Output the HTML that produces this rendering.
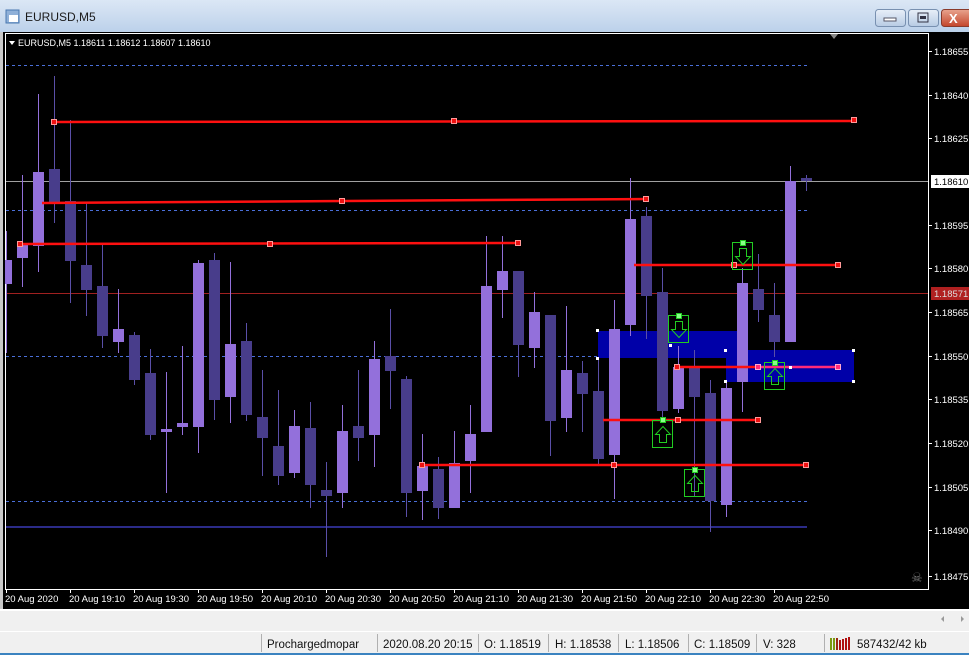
<!DOCTYPE html>
<html><head><meta charset="utf-8"><style>
html,body{margin:0;padding:0;width:969px;height:655px;overflow:hidden;background:#000;font-family:"Liberation Sans",sans-serif}
svg{display:block}
</style></head><body>
<svg width="969" height="655" xmlns="http://www.w3.org/2000/svg" font-family="Liberation Sans, sans-serif">
<defs>
<linearGradient id="tb" x1="0" y1="0" x2="0" y2="1"><stop offset="0" stop-color="#dbe7f5"/><stop offset="1" stop-color="#bcd1ea"/></linearGradient>
<linearGradient id="bt" x1="0" y1="0" x2="0" y2="1"><stop offset="0" stop-color="#e8eff8"/><stop offset="1" stop-color="#b7cbe4"/></linearGradient>
<linearGradient id="cl" x1="0" y1="0" x2="0" y2="1"><stop offset="0" stop-color="#e8a48f"/><stop offset="1" stop-color="#c4452a"/></linearGradient>
</defs>
<rect x="0" y="0" width="969" height="32" fill="url(#tb)"/>
<rect x="6" y="10" width="13" height="13" fill="#8fb0d8" stroke="#4a78b0"/>
<rect x="9" y="15" width="9" height="7" fill="#fff"/>
<text x="25" y="21" font-size="12" fill="#1a1a1a">EURUSD,M5</text>
<rect x="875.5" y="9.5" width="30" height="17" rx="3" fill="url(#bt)" stroke="#7890b0"/>
<rect x="884" y="18" width="12" height="3" fill="#fff" stroke="#556"/>
<rect x="908.5" y="9.5" width="30" height="17" rx="3" fill="url(#bt)" stroke="#7890b0"/>
<rect x="918" y="13" width="10" height="9" fill="none" stroke="#334"/><rect x="920" y="16" width="6" height="3" fill="#334"/>
<rect x="941.5" y="9.5" width="30" height="17" rx="3" fill="url(#cl)" stroke="#8a3a2a"/>
<text x="949" y="23" font-size="13" font-weight="bold" fill="#fff">X</text>
<rect x="0" y="32" width="969" height="577" fill="#000"/>
<rect x="0" y="32" width="3" height="577" fill="#c8c8c8"/>
<rect x="5.5" y="33.5" width="923" height="556" fill="none" stroke="#fff"/>
<g stroke="#4a6fd8" stroke-dasharray="3,3" stroke-width="1">
<line x1="6" y1="65.5" x2="807" y2="65.5"/>
<line x1="6" y1="210.5" x2="807" y2="210.5"/>
<line x1="6" y1="356.5" x2="807" y2="356.5"/>
<line x1="6" y1="501.5" x2="807" y2="501.5"/>
</g>
<line x1="6" y1="527" x2="807" y2="527" stroke="#2b2b88" stroke-width="2"/>
<line x1="6" y1="181.5" x2="928" y2="181.5" stroke="#a0a0a0"/>
<line x1="6" y1="293.5" x2="928" y2="293.5" stroke="#a02020"/>
<rect x="598" y="331" width="142" height="27" fill="#0000a8"/>
<rect x="726" y="350" width="128" height="32" fill="#0000a8"/>
<g stroke-width="1">
<g fill="#9370db" stroke="#9370db">
<line x1="6.5" y1="231" x2="6.5" y2="353"/><rect x="5" y="260" width="7" height="24" stroke="none"/>
<line x1="22.5" y1="175" x2="22.5" y2="287"/><rect x="17" y="245" width="11" height="13" stroke="none"/>
<line x1="38.5" y1="94" x2="38.5" y2="272"/><rect x="33" y="172" width="11" height="74" stroke="none"/>
<line x1="118.5" y1="289" x2="118.5" y2="353"/><rect x="113" y="329" width="11" height="13" stroke="none"/>
<line x1="166.5" y1="372" x2="166.5" y2="493"/><rect x="161" y="429" width="11" height="3" stroke="none"/>
<line x1="182.5" y1="346" x2="182.5" y2="435"/><rect x="177" y="423" width="11" height="4" stroke="none"/>
<line x1="198.5" y1="260" x2="198.5" y2="453"/><rect x="193" y="263" width="11" height="164" stroke="none"/>
<line x1="230.5" y1="262" x2="230.5" y2="423"/><rect x="225" y="344" width="11" height="53" stroke="none"/>
<line x1="294.5" y1="410" x2="294.5" y2="478"/><rect x="289" y="426" width="11" height="47" stroke="none"/>
<line x1="342.5" y1="405" x2="342.5" y2="508"/><rect x="337" y="431" width="11" height="62" stroke="none"/>
<line x1="374.5" y1="341" x2="374.5" y2="467"/><rect x="369" y="359" width="11" height="76" stroke="none"/>
<line x1="422.5" y1="434" x2="422.5" y2="520"/><rect x="417" y="466" width="11" height="25" stroke="none"/>
<line x1="454.5" y1="431" x2="454.5" y2="508"/><rect x="449" y="463" width="11" height="45" stroke="none"/>
<line x1="470.5" y1="405" x2="470.5" y2="493"/><rect x="465" y="434" width="11" height="27" stroke="none"/>
<line x1="486.5" y1="236" x2="486.5" y2="432"/><rect x="481" y="286" width="11" height="146" stroke="none"/>
<line x1="502.5" y1="236" x2="502.5" y2="318"/><rect x="497" y="271" width="11" height="19" stroke="none"/>
<line x1="534.5" y1="292" x2="534.5" y2="368"/><rect x="529" y="312" width="11" height="36" stroke="none"/>
<line x1="566.5" y1="306" x2="566.5" y2="432"/><rect x="561" y="370" width="11" height="48" stroke="none"/>
<line x1="614.5" y1="300" x2="614.5" y2="499"/><rect x="609" y="329" width="11" height="126" stroke="none"/>
<line x1="630.5" y1="178" x2="630.5" y2="336"/><rect x="625" y="219" width="11" height="106" stroke="none"/>
<line x1="678.5" y1="346" x2="678.5" y2="413"/><rect x="673" y="367" width="11" height="42" stroke="none"/>
<line x1="726.5" y1="380" x2="726.5" y2="517"/><rect x="721" y="388" width="11" height="117" stroke="none"/>
<line x1="742.5" y1="268" x2="742.5" y2="412"/><rect x="737" y="283" width="11" height="99" stroke="none"/>
<line x1="790.5" y1="166" x2="790.5" y2="342"/><rect x="785" y="181" width="11" height="161" stroke="none"/>
</g>
<g fill="#483d8b" stroke="#5a4fa8">
<line x1="54.5" y1="76" x2="54.5" y2="223"/><rect x="49" y="169" width="11" height="33" stroke="none"/>
<line x1="70.5" y1="120" x2="70.5" y2="303"/><rect x="65" y="201" width="11" height="60" stroke="none"/>
<line x1="86.5" y1="203" x2="86.5" y2="316"/><rect x="81" y="265" width="11" height="25" stroke="none"/>
<line x1="102.5" y1="245" x2="102.5" y2="348"/><rect x="97" y="286" width="11" height="50" stroke="none"/>
<line x1="134.5" y1="332" x2="134.5" y2="385"/><rect x="129" y="335" width="11" height="45" stroke="none"/>
<line x1="150.5" y1="349" x2="150.5" y2="440"/><rect x="145" y="373" width="11" height="62" stroke="none"/>
<line x1="214.5" y1="253" x2="214.5" y2="420"/><rect x="209" y="260" width="11" height="140" stroke="none"/>
<line x1="246.5" y1="323" x2="246.5" y2="421"/><rect x="241" y="341" width="11" height="74" stroke="none"/>
<line x1="262.5" y1="370" x2="262.5" y2="476"/><rect x="257" y="417" width="11" height="21" stroke="none"/>
<line x1="278.5" y1="390" x2="278.5" y2="485"/><rect x="273" y="446" width="11" height="30" stroke="none"/>
<line x1="310.5" y1="402" x2="310.5" y2="508"/><rect x="305" y="428" width="11" height="57" stroke="none"/>
<line x1="326.5" y1="462" x2="326.5" y2="557"/><rect x="321" y="490" width="11" height="6" stroke="none"/>
<line x1="358.5" y1="370" x2="358.5" y2="461"/><rect x="353" y="426" width="11" height="12" stroke="none"/>
<line x1="390.5" y1="309" x2="390.5" y2="409"/><rect x="385" y="356" width="11" height="15" stroke="none"/>
<line x1="406.5" y1="376" x2="406.5" y2="517"/><rect x="401" y="379" width="11" height="114" stroke="none"/>
<line x1="438.5" y1="457" x2="438.5" y2="519"/><rect x="433" y="469" width="11" height="39" stroke="none"/>
<line x1="518.5" y1="271" x2="518.5" y2="377"/><rect x="513" y="271" width="11" height="74" stroke="none"/>
<line x1="550.5" y1="315" x2="550.5" y2="456"/><rect x="545" y="315" width="11" height="106" stroke="none"/>
<line x1="582.5" y1="361" x2="582.5" y2="432"/><rect x="577" y="373" width="11" height="21" stroke="none"/>
<line x1="598.5" y1="360" x2="598.5" y2="466"/><rect x="593" y="391" width="11" height="68" stroke="none"/>
<line x1="646.5" y1="207" x2="646.5" y2="339"/><rect x="641" y="216" width="11" height="80" stroke="none"/>
<line x1="662.5" y1="268" x2="662.5" y2="420"/><rect x="657" y="292" width="11" height="119" stroke="none"/>
<line x1="694.5" y1="350" x2="694.5" y2="497"/><rect x="689" y="367" width="11" height="30" stroke="none"/>
<line x1="710.5" y1="380" x2="710.5" y2="532"/><rect x="705" y="393" width="11" height="108" stroke="none"/>
<line x1="758.5" y1="254" x2="758.5" y2="322"/><rect x="753" y="289" width="11" height="21" stroke="none"/>
<line x1="774.5" y1="283" x2="774.5" y2="357"/><rect x="769" y="315" width="11" height="27" stroke="none"/>
<line x1="806.5" y1="175" x2="806.5" y2="191"/><rect x="801" y="178" width="11" height="3" stroke="none"/>
</g>
</g>
<g stroke="#ff1010" stroke-width="2.5">
<line x1="54" y1="122" x2="854" y2="121"/>
<line x1="42" y1="203" x2="646" y2="199"/>
<line x1="20" y1="244" x2="518" y2="243"/>
<line x1="634" y1="265" x2="838" y2="265"/>
<line x1="603" y1="420" x2="758" y2="420"/>
<line x1="420" y1="465" x2="806" y2="465"/>
<line x1="677" y1="367" x2="758" y2="367"/>
</g>
<line x1="758" y1="367" x2="838" y2="367" stroke="#ff2a7a" stroke-width="2.5"/>
<g fill="#ee1111" stroke="#ff9999" stroke-width="1">
<rect x="51.5" y="119.5" width="5" height="5"/><rect x="451.5" y="118.5" width="5" height="5"/><rect x="851.5" y="117.5" width="5" height="5"/>
<rect x="339.5" y="198.5" width="5" height="5"/><rect x="643.5" y="196.5" width="5" height="5"/>
<rect x="17.5" y="241.5" width="5" height="5"/><rect x="267.5" y="241.5" width="5" height="5"/><rect x="515.5" y="240.5" width="5" height="5"/>
<rect x="731.5" y="262.5" width="5" height="5"/><rect x="835.5" y="262.5" width="5" height="5"/>
<rect x="675.5" y="417.5" width="5" height="5"/><rect x="755.5" y="417.5" width="5" height="5"/>
<rect x="419.5" y="462.5" width="5" height="5"/><rect x="611.5" y="462.5" width="5" height="5"/><rect x="803.5" y="462.5" width="5" height="5"/>
<rect x="674.5" y="364.5" width="5" height="5"/>
</g>
<g fill="#ff2a7a" stroke="#ffaacc"><rect x="755.5" y="364.5" width="5" height="5"/><rect x="835.5" y="364.5" width="5" height="5"/></g>
<g fill="#fff">
<rect x="596" y="329" width="3" height="3"/><rect x="596" y="357" width="3" height="3"/><rect x="669" y="344" width="3" height="3"/>
<rect x="724" y="349" width="3" height="3"/><rect x="724" y="380" width="3" height="3"/><rect x="852" y="349" width="3" height="3"/><rect x="852" y="380" width="3" height="3"/><rect x="789" y="366" width="3" height="3"/>
</g>
<g fill="none" stroke="#22cc22" stroke-width="1">
<rect x="668.5" y="315.5" width="20" height="27"/>
<rect x="732.5" y="242.5" width="20" height="27"/>
<rect x="652.5" y="420.5" width="20" height="27"/>
<rect x="684.5" y="469.5" width="20" height="27"/>
<rect x="764.5" y="362.5" width="20" height="27"/>
<path d="M675.5 321.5h7v8h4l-7.5 8-7.5-8h4z"/>
<path d="M739.5 248.5h7v8h4l-7.5 8-7.5-8h4z"/>
<path d="M659.5 442.5h7v-8h4l-7.5-8-7.5 8h4z"/>
<path d="M691.5 491.5h7v-8h4l-7.5-8-7.5 8h4z"/>
<path d="M771.5 384.5h7v-8h4l-7.5-8-7.5 8h4z"/>
</g>
<g fill="#88ff88" stroke="#22cc22"><rect x="676.5" y="313.5" width="5" height="5"/><rect x="740.5" y="240.5" width="5" height="5"/><rect x="660.5" y="417.5" width="5" height="5"/><rect x="692.5" y="467.5" width="5" height="5"/><rect x="772.5" y="360.5" width="5" height="5"/></g>
<path d="M9 41h6l-3 4z" fill="#fff"/>
<text x="18" y="46" font-size="9" fill="#fff">EURUSD,M5  1.18611 1.18612 1.18607 1.18610</text>
<path d="M830 34h8l-4 5z" fill="#888"/>
<text x="911" y="582" font-size="13" fill="#777">☠</text>
<g font-size="9.5" fill="#fff">
<g stroke="#fff"><line x1="929" y1="51.5" x2="932" y2="51.5"/><line x1="929" y1="95.5" x2="932" y2="95.5"/><line x1="929" y1="138.5" x2="932" y2="138.5"/><line x1="929" y1="225.5" x2="932" y2="225.5"/><line x1="929" y1="268.5" x2="932" y2="268.5"/><line x1="929" y1="312.5" x2="932" y2="312.5"/><line x1="929" y1="356.5" x2="932" y2="356.5"/><line x1="929" y1="399.5" x2="932" y2="399.5"/><line x1="929" y1="443.5" x2="932" y2="443.5"/><line x1="929" y1="487.5" x2="932" y2="487.5"/><line x1="929" y1="530.5" x2="932" y2="530.5"/><line x1="929" y1="576.5" x2="932" y2="576.5"/></g>
<text x="934" y="55">1.18655</text><text x="934" y="99">1.18640</text><text x="934" y="142">1.18625</text>
<rect x="931" y="175" width="38" height="13" fill="#fff"/><text x="934" y="185" fill="#000">1.18610</text>
<text x="934" y="229">1.18595</text><text x="934" y="272">1.18580</text>
<rect x="931" y="287" width="38" height="13" fill="#b02020"/><text x="934" y="297" fill="#ddd">1.18571</text>
<text x="934" y="316">1.18565</text><text x="934" y="360">1.18550</text><text x="934" y="403">1.18535</text><text x="934" y="447">1.18520</text><text x="934" y="491">1.18505</text><text x="934" y="534">1.18490</text><text x="934" y="580">1.18475</text>
</g>
<g font-size="9.5" fill="#fff">
<g stroke="#fff"><line x1="6.5" y1="589" x2="6.5" y2="593"/><line x1="70.5" y1="589" x2="70.5" y2="593"/><line x1="134.5" y1="589" x2="134.5" y2="593"/><line x1="198.5" y1="589" x2="198.5" y2="593"/><line x1="262.5" y1="589" x2="262.5" y2="593"/><line x1="326.5" y1="589" x2="326.5" y2="593"/><line x1="390.5" y1="589" x2="390.5" y2="593"/><line x1="454.5" y1="589" x2="454.5" y2="593"/><line x1="518.5" y1="589" x2="518.5" y2="593"/><line x1="582.5" y1="589" x2="582.5" y2="593"/><line x1="646.5" y1="589" x2="646.5" y2="593"/><line x1="710.5" y1="589" x2="710.5" y2="593"/><line x1="774.5" y1="589" x2="774.5" y2="593"/></g>
<text x="5" y="602">20 Aug 2020</text><text x="69" y="602">20 Aug 19:10</text><text x="133" y="602">20 Aug 19:30</text><text x="197" y="602">20 Aug 19:50</text><text x="261" y="602">20 Aug 20:10</text><text x="325" y="602">20 Aug 20:30</text><text x="389" y="602">20 Aug 20:50</text><text x="453" y="602">20 Aug 21:10</text><text x="517" y="602">20 Aug 21:30</text><text x="581" y="602">20 Aug 21:50</text><text x="645" y="602">20 Aug 22:10</text><text x="709" y="602">20 Aug 22:30</text><text x="773" y="602">20 Aug 22:50</text>
</g>
<rect x="0" y="609" width="969" height="2" fill="#fff"/>
<rect x="0" y="611" width="969" height="21" fill="#f0f0f0"/>
<rect x="0" y="631" width="969" height="1" fill="#fff"/>
<rect x="0" y="632" width="969" height="21" fill="#f0f0f0"/>
<rect x="0" y="653" width="969" height="2" fill="#3b83c0"/>
<path d="M944 616v6l-3-3z" fill="#999"/><path d="M961 616v6l3-3z" fill="#999"/>
<g stroke="#b0b0b0"><line x1="261.5" y1="634" x2="261.5" y2="652"/><line x1="377.5" y1="634" x2="377.5" y2="652"/><line x1="478.5" y1="634" x2="478.5" y2="652"/><line x1="548.5" y1="634" x2="548.5" y2="652"/><line x1="618.5" y1="634" x2="618.5" y2="652"/><line x1="688.5" y1="634" x2="688.5" y2="652"/><line x1="756.5" y1="634" x2="756.5" y2="652"/><line x1="824.5" y1="634" x2="824.5" y2="652"/></g>
<g font-size="11.5" fill="#111">
<text x="267" y="648">Prochargedmopar</text><text x="383" y="648">2020.08.20 20:15</text><text x="484" y="648">O: 1.18519</text><text x="555" y="648">H: 1.18538</text><text x="625" y="648">L: 1.18506</text><text x="694" y="648">C: 1.18509</text><text x="763" y="648">V: 328</text><text x="857" y="648">587432/42 kb</text>
</g>
<g stroke-width="2">
<line x1="831" y1="638" x2="831" y2="650" stroke="#7a9a10"/><line x1="834" y1="638" x2="834" y2="650" stroke="#7a9a10"/><line x1="837" y1="638" x2="837" y2="650" stroke="#9a2a10"/><line x1="840" y1="640" x2="840" y2="650" stroke="#b01010"/><line x1="843" y1="639" x2="843" y2="650" stroke="#b01010"/><line x1="846" y1="638" x2="846" y2="650" stroke="#b01010"/><line x1="849" y1="637" x2="849" y2="650" stroke="#b01010"/>
</g>
</svg>
</body></html>
